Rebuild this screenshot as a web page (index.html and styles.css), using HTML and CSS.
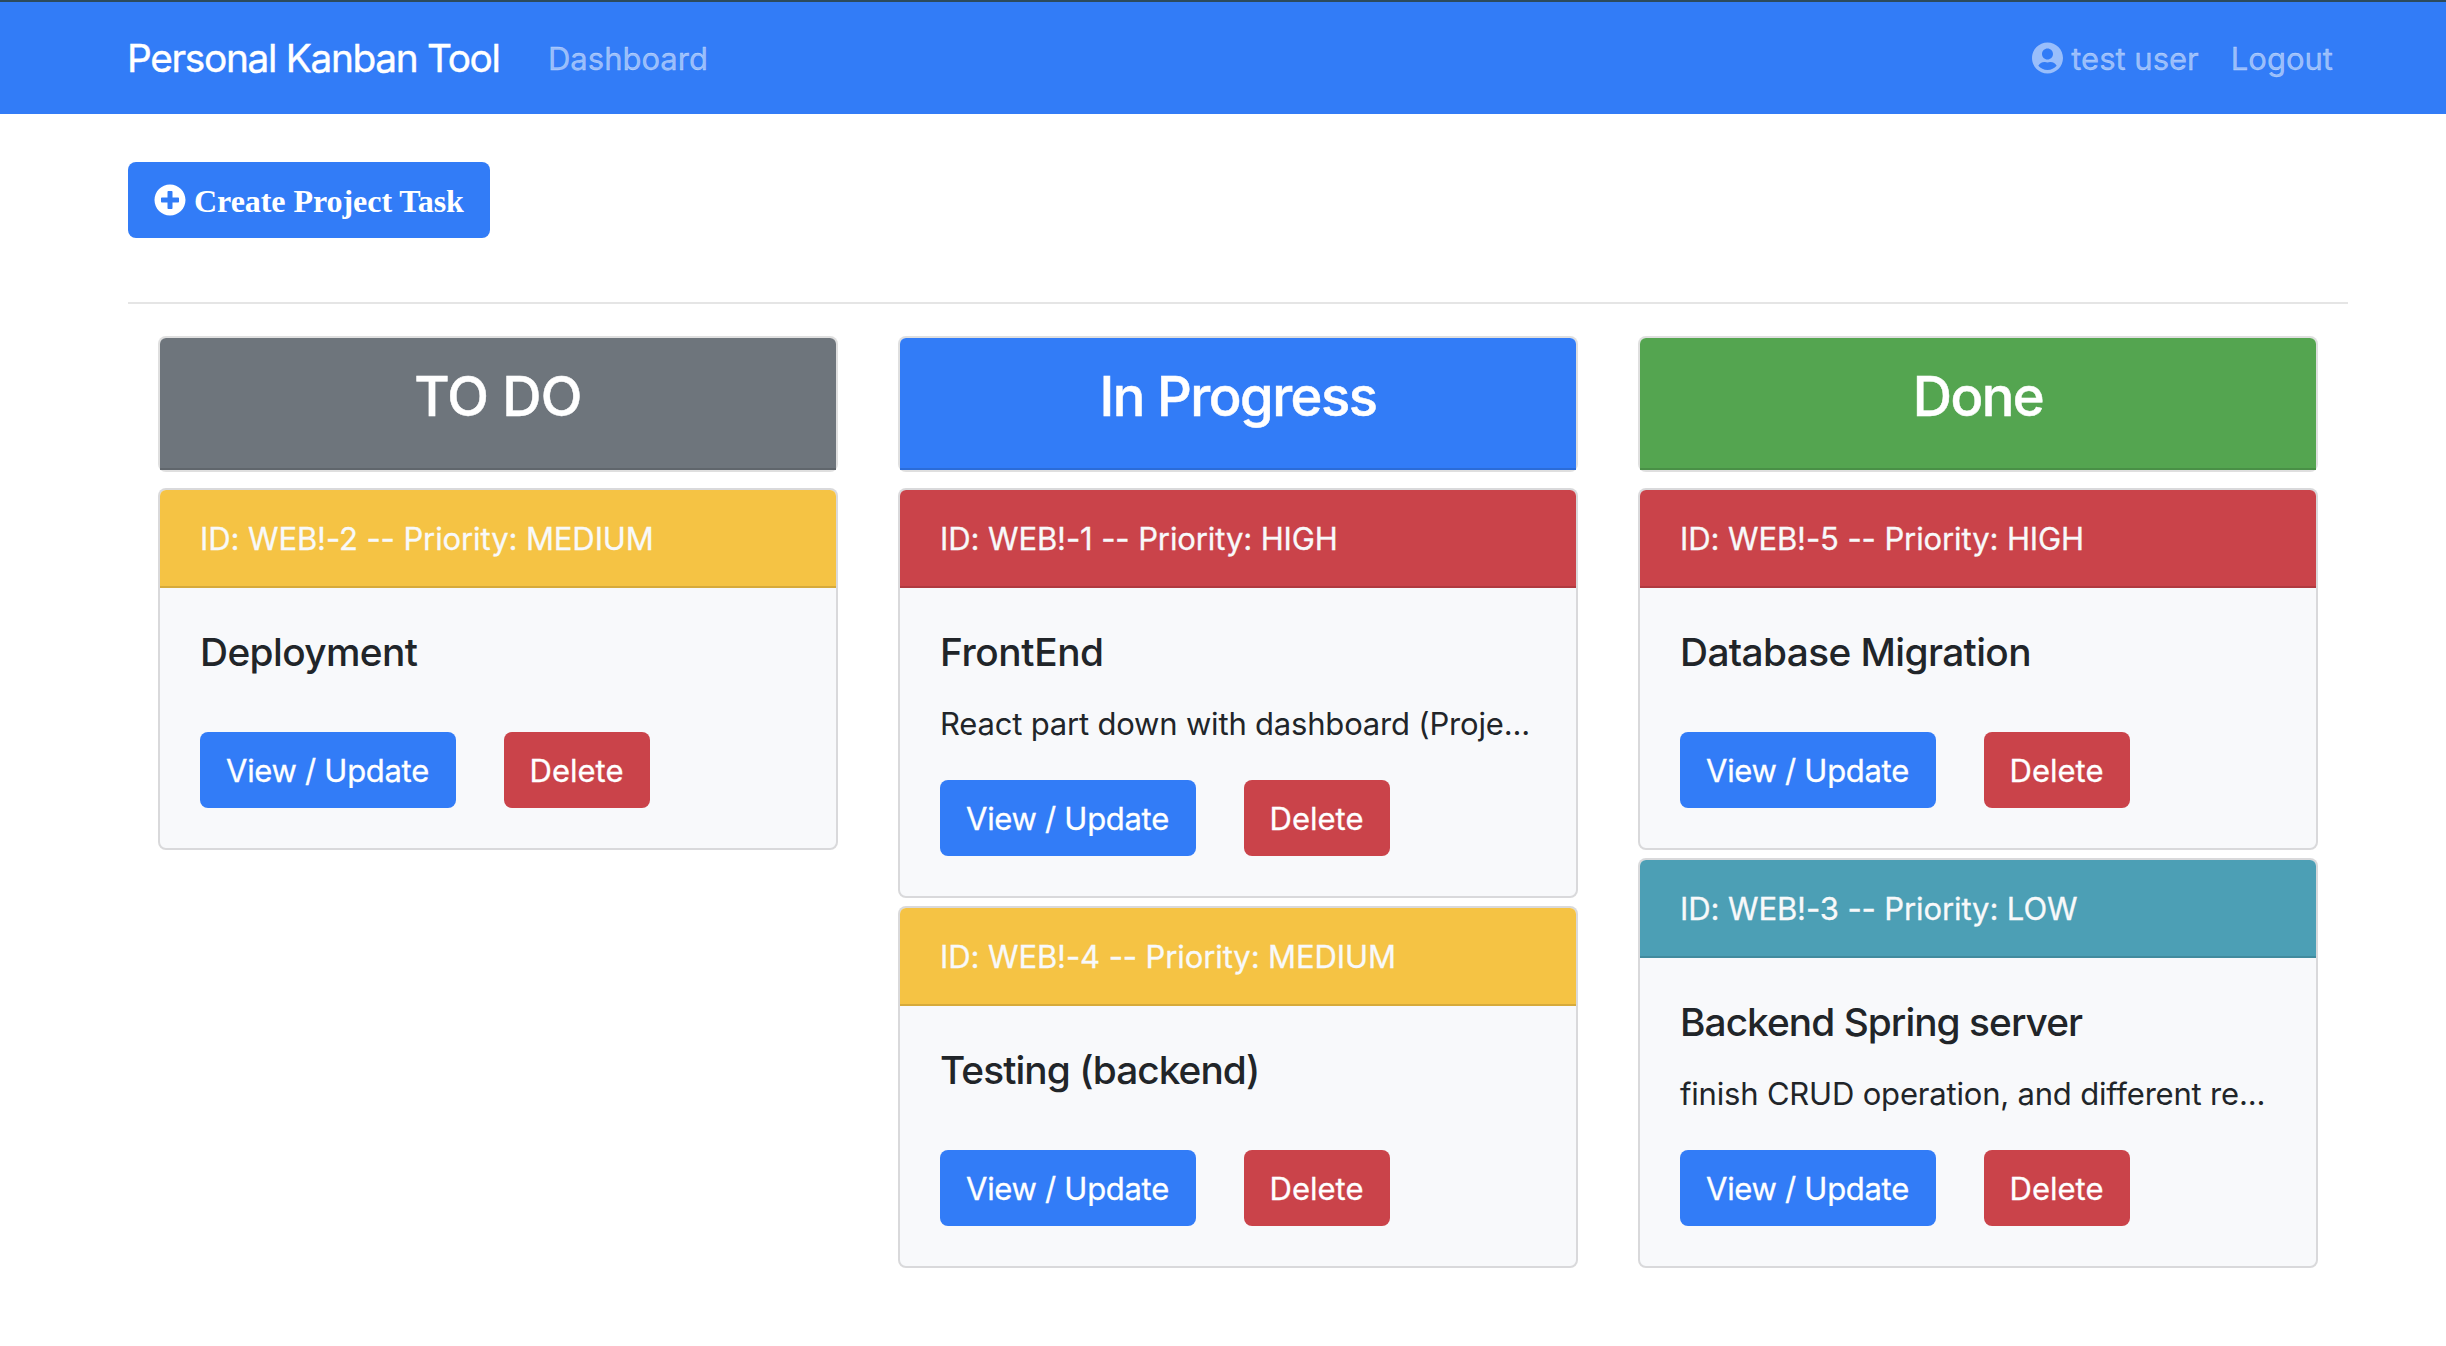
FILE: index.html
```
<!DOCTYPE html>
<html lang="en">
<head>
<meta charset="utf-8">
<title>Personal Kanban Tool</title>
<link rel="stylesheet" href="styles.css">
</head>
<body>
<nav class="navbar">
  <div class="container navbar-inner">
    <a class="brand">Personal Kanban Tool</a>
    <a class="nav-link">Dashboard</a>
    <div class="nav-right">
      <a class="nav-link user">
        <svg class="icon-user" viewBox="0 0 496 512" fill="currentColor"><path d="M248 8C111 8 0 119 0 256s111 248 248 248 248-111 248-248S385 8 248 8zm0 96c48.6 0 88 39.4 88 88s-39.4 88-88 88-88-39.4-88-88 39.4-88 88-88zm0 344c-58.7 0-111.3-26.6-146.5-68.2 18.8-35.4 55.6-59.8 98.5-59.8 2.4 0 4.8.4 7.1 1.1 13 4.2 26.6 6.9 40.9 6.9 14.3 0 28-2.7 40.9-6.9 2.3-.7 4.7-1.1 7.1-1.1 42.9 0 79.7 24.4 98.5 59.8C359.3 421.4 306.7 448 248 448z"/></svg>
        <span>test user</span>
      </a>
      <a class="nav-link">Logout</a>
    </div>
  </div>
</nav>

<main class="container">
  <a class="btn-create">
    <svg class="icon-plus" viewBox="0 0 512 512" fill="currentColor"><path d="M256 8C119 8 8 119 8 256s111 248 248 248 248-111 248-248S393 8 256 8zm144 276c0 6.6-5.4 12-12 12h-92v92c0 6.6-5.4 12-12 12h-56c-6.6 0-12-5.4-12-12v-92h-92c-6.6 0-12-5.4-12-12v-56c0-6.6 5.4-12 12-12h92v-92c0-6.6 5.4-12 12-12h56c6.6 0 12 5.4 12 12v92h92c6.6 0 12 5.4 12 12v56z"/></svg>
    <span class="create-label">Create Project Task</span>
  </a>
  <hr class="divider">

  <div class="board">
    <section class="column">
      <div class="card column-card"><h3 class="column-title column-title-caps bg-secondary">TO DO</h3></div>
      <article class="card task">
        <div class="task-header bg-warning">ID: WEB!-2 -- Priority: MEDIUM</div>
        <div class="task-body">
          <h5 class="task-title">Deployment</h5>
          <p class="task-text"></p>
          <div class="actions"><a class="btn btn-view">View / Update</a><a class="btn btn-delete">Delete</a></div>
        </div>
      </article>
    </section>

    <section class="column">
      <div class="card column-card"><h3 class="column-title bg-primary">In Progress</h3></div>
      <article class="card task">
        <div class="task-header bg-danger">ID: WEB!-1 -- Priority: HIGH</div>
        <div class="task-body">
          <h5 class="task-title title-loose">FrontEnd</h5>
          <p class="task-text">React part down with dashboard (Proje...</p>
          <div class="actions"><a class="btn btn-view">View / Update</a><a class="btn btn-delete">Delete</a></div>
        </div>
      </article>
      <article class="card task">
        <div class="task-header bg-warning">ID: WEB!-4 -- Priority: MEDIUM</div>
        <div class="task-body">
          <h5 class="task-title title-tight">Testing (backend)</h5>
          <p class="task-text"></p>
          <div class="actions"><a class="btn btn-view">View / Update</a><a class="btn btn-delete">Delete</a></div>
        </div>
      </article>
    </section>

    <section class="column">
      <div class="card column-card"><h3 class="column-title bg-success">Done</h3></div>
      <article class="card task">
        <div class="task-header bg-danger">ID: WEB!-5 -- Priority: HIGH</div>
        <div class="task-body">
          <h5 class="task-title">Database Migration</h5>
          <p class="task-text"></p>
          <div class="actions"><a class="btn btn-view">View / Update</a><a class="btn btn-delete">Delete</a></div>
        </div>
      </article>
      <article class="card task">
        <div class="task-header bg-info">ID: WEB!-3 -- Priority: LOW</div>
        <div class="task-body">
          <h5 class="task-title title-tight">Backend Spring server</h5>
          <p class="task-text">finish CRUD operation, and different re...</p>
          <div class="actions"><a class="btn btn-view">View / Update</a><a class="btn btn-delete">Delete</a></div>
        </div>
      </article>
    </section>
  </div>
</main>
</body>
</html>
```
FILE: styles.css
```
*, *::before, *::after { box-sizing: border-box; }

body {
  margin: 0;
  background: #fff;
  color: #212529;
  font: 400 31px/48px Inter, "Liberation Sans", sans-serif;
}

h3, h5, p { margin: 0; font-weight: 500; }

.container { width: 2220px; margin-left: 128px; }

/* Navigation */
.navbar {
  height: 114px;
  border-top: 2px solid #2c4a5c;
  background: #327cf7;
}
.navbar-inner { display: flex; align-items: center; height: 112px; }
.brand {
  width: 405px;
  margin-left: -1px;
  color: #fff;
  font-size: 38.8px;
  line-height: 60px;
  letter-spacing: -1.32px;
  white-space: nowrap;
  -webkit-text-stroke: .4px currentColor;
}
.nav-link {
  padding: 1px 16px 0;
  color: rgba(255, 255, 255, .5);
  white-space: nowrap;
  -webkit-text-stroke: .3px currentColor;
}
.nav-right { display: flex; margin: 0 -1px 0 auto; }
.user { display: flex; align-items: center; gap: 8px; }
.icon-user { width: 31px; height: 32px; margin-top: -1px; }

/* Toolbar */
.btn-create {
  display: flex;
  align-items: center;
  gap: 8px;
  width: 362px;
  height: 76px;
  margin-top: 48px;
  padding-left: 26px;
  border-radius: 8px;
  background: #327cf7;
  color: #fff;
}
.icon-plus { width: 32px; height: 32px; }
.create-label {
  padding-top: 2px;
  font: 700 32px/48px "Liberation Serif", serif;
  letter-spacing: -.05px;
  white-space: nowrap;
}
.divider { height: 2px; margin: 64px 0 32px; border: 0; background: #e5e5e5; }

/* Board */
.board { display: grid; grid-template-columns: repeat(3, 740px); }
.column { padding: 0 30px; }
.card { border: 2px solid rgba(0, 0, 0, .125); border-radius: 8px; }
.column-card { height: 136px; margin-bottom: 16px; background: #fff; }
.column-title {
  height: 132px;
  padding-top: 25px;
  border-bottom: 2px solid rgba(0, 0, 0, .125);
  border-radius: 6px 6px 0 0;
  color: #fff;
  font-size: 54.3px;
  line-height: 67px;
  letter-spacing: -1.5px;
  text-align: center;
  -webkit-text-stroke: .5px currentColor;
}
.column-title-caps { letter-spacing: -.6px; }

.task { margin-bottom: 8px; background: #f8f9fb; }
.task-header {
  height: 98px;
  padding: 25px 40px 23px;
  border-bottom: 2px solid rgba(0, 0, 0, .125);
  border-radius: 6px 6px 0 0;
  color: #f8f9fa;
  letter-spacing: -.1px;
  white-space: nowrap;
  -webkit-text-stroke: .3px currentColor;
}
.task-body { padding: 40px; }
.task-title {
  margin-bottom: 24px;
  font-size: 38.8px;
  line-height: 48px;
  letter-spacing: -.6px;
  white-space: nowrap;
}
.title-tight { letter-spacing: -.94px; }
.title-loose { letter-spacing: -.4px; }
/* flow-root keeps the bottom margin of an empty description from collapsing */
.task-text {
  display: flow-root;
  margin-bottom: 32px;
  font-weight: 400;
  letter-spacing: -.19px;
  white-space: nowrap;
}

.actions { display: flex; gap: 48px; }
.btn {
  height: 76px;
  padding-top: 1px;
  border-radius: 8px;
  color: #fff;
  line-height: 76px;
  text-align: center;
  white-space: nowrap;
  -webkit-text-stroke: .3px currentColor;
}
.btn-view { width: 256px; padding-right: 1px; background: #327cf7; letter-spacing: -.3px; }
.btn-delete { width: 146px; padding-right: 1px; background: #ca434a; }

.bg-primary { background: #327cf7; }
.bg-secondary { background: #6e757c; }
.bg-success { background: #54a550; }
.bg-warning { background: #f5c344; }
.bg-danger { background: #ca434a; }
.bg-info { background: #4c9fb5; }
```
